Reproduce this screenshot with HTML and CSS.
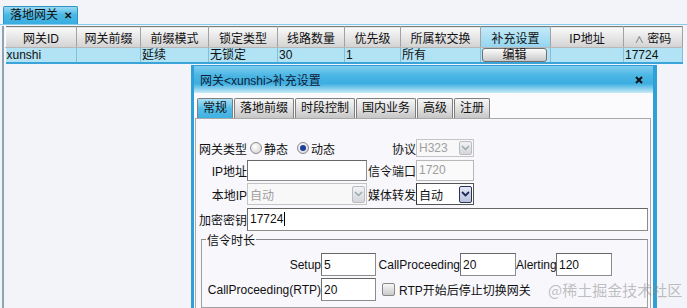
FILE: index.html
```html
<!DOCTYPE html>
<html>
<head>
<meta charset="UTF-8">
<title>落地网关</title>
<link rel="stylesheet" href="styles.css">
</head>
<body>
<div class="tabbar">
  <div class="tab">落地网关 <span class="tab-x">✕</span></div>
</div>
<div class="panel">
  <table class="grid">
    <colgroup>
      <col style="width:71px"><col style="width:64px"><col style="width:68px"><col style="width:69px"><col style="width:67px">
      <col style="width:56px"><col style="width:80px"><col style="width:70px"><col style="width:73px"><col style="width:59px">
    </colgroup>
    <thead>
      <tr>
        <th>网关ID</th><th>网关前缀</th><th>前缀模式</th><th>锁定类型</th><th>线路数量</th>
        <th>优先级</th><th>所属软交换</th><th class="sel">补充设置</th><th>IP地址</th><th><span class="sort">∧</span> 密码</th>
      </tr>
    </thead>
    <tbody>
      <tr>
        <td>xunshi</td><td></td><td>延续</td><td>无锁定</td><td>30</td>
        <td>1</td><td>所有</td><td><span class="btn">编辑</span></td><td></td><td>17724</td>
      </tr>
    </tbody>
  </table>
</div>

<div class="dialog">
  <div class="dlg-title">
    <span>网关&lt;xunshi&gt;补充设置</span>
    <svg class="dlg-close" width="8" height="8" viewBox="0 0 8 8"><path d="M1 1L7 7M7 1L1 7" stroke="#111" stroke-width="2"/></svg>
  </div>
  <div class="dlg-tabs">
    <span class="dtab on">常规</span>
    <span class="dtab">落地前缀</span>
    <span class="dtab">时段控制</span>
    <span class="dtab">国内业务</span>
    <span class="dtab">高级</span>
    <span class="dtab">注册</span>
  </div>
  <div class="dlg-body">
    <div class="form">
      <label class="lbl">网关类型</label>
      <div class="radios">
        <span class="radio"></span>静态
        <span class="radio checked"></span>动态
      </div>
      <label class="lbl">协议</label>
      <div class="select small disabled"><span>H323</span><span class="arrow"><svg width="9" height="6" viewBox="0 0 9 6"><path d="M1 1l3.5 3.5L8 1" fill="none" stroke="#9aa" stroke-width="1.5"/></svg></span></div>
      <span></span>

      <label class="lbl">IP地址</label>
      <input class="inp" type="text" value="">
      <label class="lbl">信令端口</label>
      <input class="inp disabled" type="text" value="1720">
      <span></span>

      <label class="lbl">本地IP</label>
      <div class="select disabled"><span>自动</span><span class="arrow"><svg width="9" height="6" viewBox="0 0 9 6"><path d="M1 1l3.5 3.5L8 1" fill="none" stroke="#9aa" stroke-width="1.5"/></svg></span></div>
      <label class="lbl">媒体转发</label>
      <div class="select active"><span>自动</span><span class="arrow"><svg width="9" height="6" viewBox="0 0 9 6"><path d="M1 1l3.5 3.5L8 1" fill="none" stroke="#1c2a5a" stroke-width="1.8"/></svg></span></div>
      <span></span>

      <label class="lbl">加密密钥</label>
      <div class="inp wide">17724<span class="caret"></span></div>
    </div>

    <fieldset class="times">
      <legend>信令时长</legend>
      <div class="trow">
        <label class="lbl">Setup</label>
        <input class="inp" type="text" value="5">
        <label class="lbl">CallProceeding</label>
        <input class="inp" type="text" value="20">
        <label class="lbl">Alerting</label>
        <input class="inp" type="text" value="120">

        <label class="lbl">CallProceeding(RTP)</label>
        <input class="inp" type="text" value="20">
        <div class="check"><span class="box"></span>RTP开始后停止切换网关</div>
      </div>
    </fieldset>
  </div>
</div>
<div class="watermark">@稀土掘金技术社区</div>
</body>
</html>
```

FILE: styles.css
```css
body { margin: 0; width: 687px; height: 308px; overflow: hidden; background: #f3f4fa; font: 12px "Liberation Sans", "Noto Sans CJK SC", sans-serif; color: #111; }

/* top tab strip */
.tabbar { height: 24px; border-bottom: 1px solid #86cdec; padding-left: 3px; box-sizing: content-box; display: flex; align-items: flex-end; }
.tab { height: 17px; line-height: 17px; padding: 0 5px 0 6px; background: linear-gradient(#9bdaf4, #4cb8e4 45%, #38ade0); border: 1px solid #3192c4; border-bottom: none; border-radius: 2px 2px 0 0; font-size: 12px; }
.tab-x { font-size: 10px; margin-left: 3px; font-weight: bold; }

/* grid panel */
.panel { margin-left: 2px; height: 283px; border-left: 2px solid #8ea4b0; padding-left: 1px; }
table.grid { border-collapse: collapse; table-layout: fixed; width: 677px; margin-top: 1px; border-top: 1px solid #7c7c7c; }
.grid th { height: 20px; padding: 0; font-weight: normal; background: linear-gradient(#fafafa, #e6e6e6 50%, #d2d2d2); border-right: 1px solid #a2a2a2; border-left: 1px solid #fff; border-bottom: 1px solid #b8b8b8; white-space: nowrap; }
.grid th.sel { background: linear-gradient(#c4eaf8, #93d4f0); }
.sort { font-size: 9px; color: #555; }
.grid td { height: 14px; line-height: 14px; padding: 0 1px; background: #b1e3f4; border-right: 1px solid #82bfd8; white-space: nowrap; overflow: hidden; }
.grid tbody tr { border-bottom: 2px solid #3aa4d8; }
.btn { display: block; height: 12px; line-height: 12px; margin: 0 2px 0 0; text-align: center; border: 1px solid #6f6f6f; border-radius: 3px; background: linear-gradient(#fbfbfb, #e2e2e2 50%, #c8c8c8); }

/* dialog overlay */
.dialog { position: absolute; left: 191px; top: 65px; width: 466px; height: 243px; overflow: hidden; box-sizing: border-box; border-left: 3px solid #2e9fd7; border-right: 4px solid #2e9fd7; border-top: 1px solid #2e9fd7; background: #fbfbfe; }
.dlg-title { height: 27px; display: flex; align-items: center; padding-left: 6px; background: linear-gradient(#7fcdee, #4bb6e4 35%, #3caee0 65%, #c9ebf8); color: #10203a; }
.dlg-close { margin-left: auto; margin-right: 10px; }
.dlg-tabs { display: flex; gap: 1px; padding: 5px 0 0 3px; height: 20px; }
.dtab { height: 19px; line-height: 19px; padding: 0 5px; border: 1px solid #7e7e7e; border-bottom: none; border-radius: 2px 2px 0 0; background: linear-gradient(#f6f6f6, #dcdcdc 60%, #c6c6c6); }
.dtab.on { background: linear-gradient(#a8e0f6, #55bde8 50%, #3eb1e2); }
.dlg-body { margin: 0 2px 0 1px; height: 190px; border: 1px solid #a9a9a9; border-bottom: none; background: #f7f7fc; }

/* main form */
.form { display: grid; grid-template-columns: 50px 120px 49px 58px 1fr; grid-template-rows: 20px 22px 24px 24px; row-gap: 1px; align-items: center; padding: 19px 2px 0 1px; }
.lbl { text-align: right; white-space: nowrap; }
.radios { grid-column: 2 / 3; display: flex; align-items: center; white-space: nowrap; }
.radio { width: 10px; height: 10px; border: 1px solid #8a8a8a; border-radius: 50%; background: radial-gradient(circle at 40% 35%, #fff, #cfcfcf); margin: 0 2px 0 3px; position: relative; }
.radio.checked { margin-left: 9px; }
.radio.checked::after { content: ""; position: absolute; left: 2px; top: 2px; width: 6px; height: 6px; border-radius: 50%; background: #1d3f9a; }
.inp { box-sizing: border-box; height: 21px; font: inherit; color: #111; padding: 0 2px; border: 1px solid #8c8c8c; border-top-color: #666; border-left-color: #707070; background: #fff; margin: 0; width: 100%; }
.inp.disabled { color: #9c9c9c; background: #fafafa; border-color: #b8b8b8; }
.inp.wide { grid-column: 2 / 6; height: 23px; line-height: 21px; display: flex; align-items: center; }
.caret { display: inline-block; width: 1px; height: 14px; background: #000; margin-left: 1px; }
.select { box-sizing: border-box; height: 22px; display: flex; align-items: center; justify-content: space-between; padding-left: 2px; border: 1px solid #9a9a9a; background: #fff; }
.select.small { height: 18px; }
.select.disabled { color: #a0a0a0; background: #f8f8f8; border-color: #c4c4c4; }
.select.active { border-color: #555; border-left-color: #333; }
.arrow { width: 13px; height: 17px; box-sizing: border-box; display: flex; align-items: center; justify-content: center; border: 1px solid #b9bcc4; border-radius: 2px; background: linear-gradient(#f2f2f4, #d4d6dc); margin-right: 1px; }
.select.small .arrow { height: 14px; }
.select.active .arrow { border-color: #2a3358; background: linear-gradient(#e4e8f4, #b8c2dc); }

/* timing fieldset */
.times { margin: 0 2px 0 5px; padding: 5px 0 6px 0; border: 1px solid #a0a0a0; border-top-color: #8a8a8a; }
.times legend { margin-left: 4px; padding: 0 1px; }
.trow { display: grid; grid-template-columns: 119px 55px 84px 56px 40px 56px; grid-template-rows: 23px 23px; row-gap: 2px; align-items: center; }
.trow .inp { height: 23px; }
.check { grid-column: 3 / 7; display: flex; align-items: center; white-space: nowrap; padding-left: 6px; }
.box { width: 11px; height: 11px; border: 1px solid #888; border-radius: 2px; background: linear-gradient(#f8f8f8, #c9c9c9); margin-right: 4px; }

.watermark { position: absolute; left: 548px; top: 279px; font-size: 15px; color: rgba(140, 140, 140, 0.55); font-family: "Noto Sans CJK SC", sans-serif; white-space: nowrap; }
```
